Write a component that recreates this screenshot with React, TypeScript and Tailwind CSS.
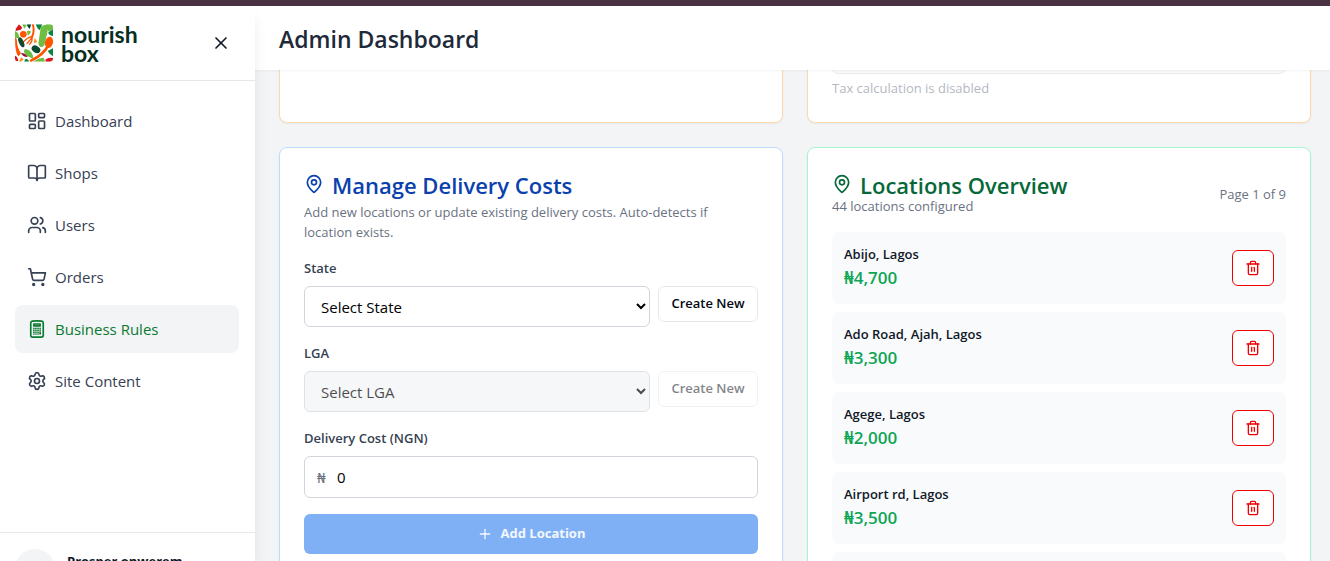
import React from "react";
import {
  BookOpen,
  LayoutDashboard,
  MapPin,
  Plus,
  Settings,
  ShoppingCart,
  Trash2,
  Users,
  X,
} from "lucide-react";
import { HiOutlineCalculator } from "react-icons/hi2";

const NAV = [
  { label: "Dashboard", icon: LayoutDashboard },
  { label: "Shops", icon: BookOpen },
  { label: "Users", icon: Users },
  { label: "Orders", icon: ShoppingCart },
  { label: "Business Rules", icon: HiOutlineCalculator, active: true },
  { label: "Site Content", icon: Settings },
];

const LOCATIONS = [
  { name: "Abijo, Lagos", cost: "₦4,700" },
  { name: "Ado Road, Ajah, Lagos", cost: "₦3,300" },
  { name: "Agege, Lagos", cost: "₦2,000" },
  { name: "Airport rd, Lagos", cost: "₦3,500" },
];

function LogoMark() {
  return (
    <svg viewBox="0 0 114 112" className="h-[38px] w-[38px] shrink-0" aria-hidden="true">
      <defs>
        <clipPath id="mark">
          <rect width="114" height="112" rx="10" />
        </clipPath>
      </defs>
      <g clipPath="url(#mark)">
        <path d="M2 14 12 0l10 10-5 6-15 4Z" fill="#d9161c" />
        <path d="M22 0q10-2 13 3l-7 10Z" fill="#6fbe44" />
        <path d="M35 0h14l-5 14q-6-4-9-14Z" fill="#0b4a2d" />
        <path d="M62 0h20l-8 18q-9-7-12-18Z" fill="#0c8245" />
        <path d="M92 0h22v12q-8 10-13 10-8-8-9-22Z" fill="#6fbe44" />
        <path d="M114 14v22q-11-2-15-11Z" fill="#0c8245" />
        <circle cx="25" cy="30" r="10" fill="#ff5500" />
        <path d="M0 20q12 4 13 20Q7 42 0 40Z" fill="#6fbe44" />
        <path d="M36 20q8-2 12 2-4 10-10 12Z" fill="#6fbe44" />
        <path d="M54 2q5 20-3 36" fill="none" stroke="#ff5500" strokeWidth="6" strokeLinecap="round" />
        <path
          d="M50 37q-12 2-24 15M49 42 36 58M51 40q2 10-7 20"
          fill="none"
          stroke="#ff5500"
          strokeWidth="4"
          strokeLinecap="round"
        />
        <path d="m59 40 8 13-11 4Z" fill="#f7931e" />
        <path d="M77 10Q84-1 94 3q7 6 3 22l-9 38q-5 8-13 4-6-4-4-16Z" fill="#6fbe44" />
        <ellipse cx="19" cy="54" rx="7" ry="16" transform="rotate(-25 19 54)" fill="#0b4a2d" />
        <ellipse cx="102" cy="54" rx="12" ry="17" transform="rotate(14 102 54)" fill="#ff5500" />
        <path d="M98 66Q86 90 48 109" fill="none" stroke="#ff5500" strokeWidth="8" strokeLinecap="round" />
        <path d="M0 40q6 0 6 12 2 22 12 34-2 6-8 10Q0 86 0 40Z" fill="#ff5500" />
        <ellipse cx="63" cy="75" rx="14" ry="10" transform="rotate(32 63 75)" fill="#0b4a2d" />
        <path d="M30 74q16 0 24 20 2 8-4 8-14-4-22-16-3-9 2-12Z" fill="#6fbe44" />
        <path d="M18 86q14 0 20 12-14 1-20-12Z" fill="#8f1238" />
        <path d="M0 94q8 2 10 16H0Z" fill="#d9161c" />
        <path d="m18 99 8 6-8 7h-6Z" fill="#f7931e" />
        <path d="M30 105q10-4 12 7H28Z" fill="#0c8245" />
        <path d="M58 110q14-10 28-10l4 12H56Z" fill="#6fbe44" />
        <path d="M114 72v24q-9-4-16-16Z" fill="#0c8245" />
        <path d="M91 106q8-7 23-5v11H92Z" fill="#d9161c" />
      </g>
    </svg>
  );
}

function Sidebar() {
  return (
    <aside className="z-20 flex w-[255px] shrink-0 flex-col bg-white shadow-lg">
      <div className="flex h-[75px] shrink-0 items-center justify-between border-b border-gray-200 pr-6 pl-[15px]">
        <a href="#" className="flex items-center gap-2 text-[#062e1f]">
          <LogoMark />
          <span className="flex flex-col pt-0.5 font-['Lato',sans-serif] text-[23px] leading-[19px] font-bold">
            <span>nourish</span>
            <span>box</span>
          </span>
        </a>
        <button type="button" aria-label="Close menu" className="text-gray-900">
          <X className="size-5" />
        </button>
      </div>
      <nav className="flex min-h-0 flex-1 flex-col gap-1 overflow-hidden pt-4 pr-4 pl-[15px]">
        {NAV.map(({ label, icon: Icon, active }) => (
          <a
            key={label}
            href="#"
            className={
              active
                ? "flex h-12 shrink-0 items-center gap-2 rounded-lg bg-gray-100 px-3 text-[15px] text-[#0b7a30]"
                : "flex h-12 shrink-0 items-center gap-2 rounded-lg px-3 text-[15px] text-gray-700"
            }
          >
            <Icon className="size-5" strokeWidth={2} />
            {label}
          </a>
        ))}
      </nav>
      <div className="-mb-11 flex shrink-0 gap-3 border-t border-gray-200 py-4 pl-[15px]">
        <div className="size-10 shrink-0 rounded-full bg-gray-100" />
        <p className="pt-0.5 text-[13px] leading-5 font-bold whitespace-nowrap text-gray-900">
          Prosper onwerem
        </p>
      </div>
    </aside>
  );
}

function DeliveryCosts() {
  return (
    <section className="rounded-lg border border-blue-200 bg-white p-6 shadow-xs">
      <h2 className="flex h-6 items-center gap-2 text-[22px] leading-6 font-semibold text-[#0a41ae]">
        <MapPin className="size-5" />
        <span className="pt-0.5">Manage Delivery Costs</span>
      </h2>
      <p className="mt-1.5 text-[13px] leading-5 text-gray-500">
        Add new locations or update existing delivery costs. Auto-detects if location exists.
      </p>
      <form className="mt-4 flex flex-col gap-4">
        <div>
          <label htmlFor="state" className="block text-[13px] leading-5 font-semibold text-gray-700">
            State
          </label>
          <div className="mt-2 flex items-start gap-2">
            <select
              id="state"
              className="h-[41px] min-w-0 flex-1 rounded-md border border-gray-300 bg-white px-3 text-[15px] text-black"
            >
              <option>Select State</option>
            </select>
            <button
              type="button"
              className="h-9 w-[100px] rounded-md border border-gray-200 text-[13px] font-semibold text-gray-950"
            >
              Create New
            </button>
          </div>
        </div>
        <div>
          <label htmlFor="lga" className="block text-[13px] leading-5 font-semibold text-gray-700">
            LGA
          </label>
          <div className="mt-2 flex items-start gap-2">
            <select
              id="lga"
              disabled
              className="h-[41px] min-w-0 flex-1 rounded-md border border-gray-300 bg-gray-100 px-3 text-[15px] text-black opacity-70"
            >
              <option>Select LGA</option>
            </select>
            <button
              type="button"
              disabled
              className="h-9 w-[100px] rounded-md border border-gray-200 text-[13px] font-semibold text-gray-950 opacity-50"
            >
              Create New
            </button>
          </div>
        </div>
        <div>
          <label htmlFor="cost" className="block text-[13px] leading-5 font-semibold text-gray-700">
            Delivery Cost (NGN)
          </label>
          <div className="mt-2 flex h-[42px] items-center gap-2 rounded-md border border-gray-300 px-3">
            <span className="w-3 text-[15px] text-gray-500">₦</span>
            <input
              id="cost"
              type="text"
              inputMode="numeric"
              defaultValue="0"
              className="min-w-0 flex-1 bg-transparent text-[15px] text-black outline-none"
            />
          </div>
        </div>
        <button
          type="submit"
          disabled
          className="flex h-10 items-center justify-center gap-2 rounded-md bg-[#7fb0f5] text-[13px] font-bold text-white/90"
        >
          <Plus className="size-4" />
          Add Location
        </button>
      </form>
    </section>
  );
}

function LocationsOverview() {
  return (
    <section className="rounded-lg border border-emerald-200 bg-white p-6 shadow-xs">
      <div className="flex items-center justify-between">
        <div>
          <h2 className="flex h-6 items-center gap-2 text-[22px] leading-6 font-semibold text-[#066839]">
            <MapPin className="size-5" />
            <span className="pt-0.5">Locations Overview</span>
          </h2>
          <p className="text-[13px] leading-5 text-gray-500">44 locations configured</p>
        </div>
        <span className="text-[13px] leading-5 text-gray-500">Page 1 of 9</span>
      </div>
      <ul className="mt-4 flex flex-col gap-2">
        {LOCATIONS.map(({ name, cost }) => (
          <li key={name} className="flex items-center justify-between rounded-lg bg-gray-50 p-3">
            <div>
              <p className="text-[13px] leading-5 font-semibold text-gray-900">{name}</p>
              <p className="text-[17px] leading-7 font-semibold text-[#0ea556]">{cost}</p>
            </div>
            <button
              type="button"
              aria-label={`Delete ${name}`}
              className="flex h-9 w-[42px] items-center justify-center rounded-md border border-[#f20000] bg-white text-[#f20000]"
            >
              <Trash2 className="size-4" />
            </button>
          </li>
        ))}
        <li className="h-[72px] rounded-lg bg-gray-50" />
      </ul>
    </section>
  );
}

export default function App() {
  return (
    <div className="flex h-screen flex-col overflow-hidden bg-gray-100 font-['Open_Sans','Noto_Sans',sans-serif]">
      <div className="h-1.5 shrink-0 bg-[#4a3243]" />
      <div className="flex min-h-0 flex-1">
        <Sidebar />
        <div className="flex min-w-0 flex-1 flex-col">
          <header className="z-10 flex h-16 shrink-0 items-center bg-white px-6 pt-0.5 shadow-xs">
            <h1 className="text-[23px] leading-8 font-semibold text-gray-800">Admin Dashboard</h1>
          </header>
          <main className="min-h-0 flex-1 overflow-hidden pr-[19px] pl-6">
            <div className="-mt-10 grid grid-cols-2 gap-6">
              <section className="rounded-lg border border-orange-200 bg-white shadow-xs" />
              <section className="flex flex-col rounded-lg border border-orange-200 bg-white px-6 pb-6 shadow-xs">
                <input
                  type="text"
                  disabled
                  aria-label="Tax rate"
                  className="h-[43px] w-full rounded-md border border-gray-300 bg-gray-100 opacity-50"
                />
                <p className="mt-1 text-[13px] leading-5 text-gray-500 opacity-50">
                  Tax calculation is disabled
                </p>
              </section>
              <DeliveryCosts />
              <LocationsOverview />
            </div>
          </main>
        </div>
      </div>
    </div>
  );
}
